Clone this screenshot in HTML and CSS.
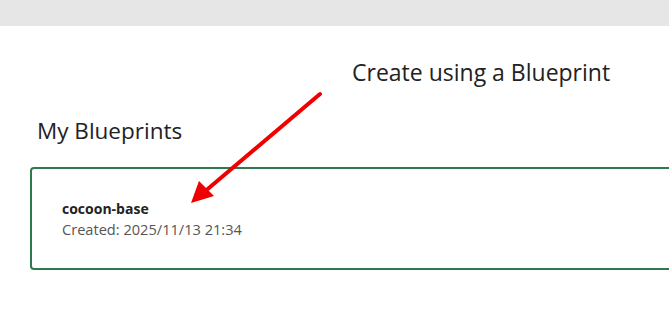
FILE: index.html
```html
<!DOCTYPE html>
<html>
<head>
  <meta charset="UTF-8">
  <title>Blueprints</title>
  <meta name="viewport" content="width=device-width, initial-scale=1.0">
  <link rel="stylesheet" href="styles.css">
</head>
<body>
  <div class="topbar"></div>

  <div class="content">
    <h2 class="create-title">Create using a Blueprint</h2>

    <h2 class="section-title">My Blueprints</h2>

    <div class="blueprint-card">
      <div class="bp-name">cocoon-base</div>
      <div class="bp-date">Created: 2025/11/13 21:34</div>
    </div>

    <svg class="arrow" width="669" height="319" viewBox="0 0 669 319">
      <line x1="320" y1="94" x2="203" y2="193" stroke="#f00000" stroke-width="4" stroke-linecap="round"/>
      <polygon points="191,203 199,181 214,196" fill="#f00000"/>
    </svg>
  </div>
</body>
</html>
```

FILE: styles.css
```css
body {
  margin: 0;
  font-family: "Open Sans", "Noto Sans", sans-serif;
  background-color: #fff;
  color: #222;
  overflow: hidden;
}
.topbar {
  height: 26px;
  background-color: #e6e6e6;
}
.content {
  padding: 0 0 0 30px;
}
.create-title {
  margin: 31px 0 0 322px;
  font-size: 23px;
  font-weight: normal;
  line-height: 30px;
}
.section-title {
  margin: 29px 0 0 7px;
  font-size: 22.5px;
  font-weight: normal;
  line-height: 30px;
}
.blueprint-card {
  margin-top: 21px;
  width: 660px;
  height: 103px;
  box-sizing: border-box;
  border: 2px solid #2f7a4c;
  border-radius: 4px;
  padding: 30px 0 0 30px;
}
.bp-name {
  font-size: 14px;
  font-weight: bold;
  color: #222;
  line-height: 20px;
}
.bp-date {
  font-size: 14.6px;
  color: #555;
  line-height: 20px;
}
.arrow {
  position: absolute;
  left: 0;
  top: 0;
  pointer-events: none;
}
```
